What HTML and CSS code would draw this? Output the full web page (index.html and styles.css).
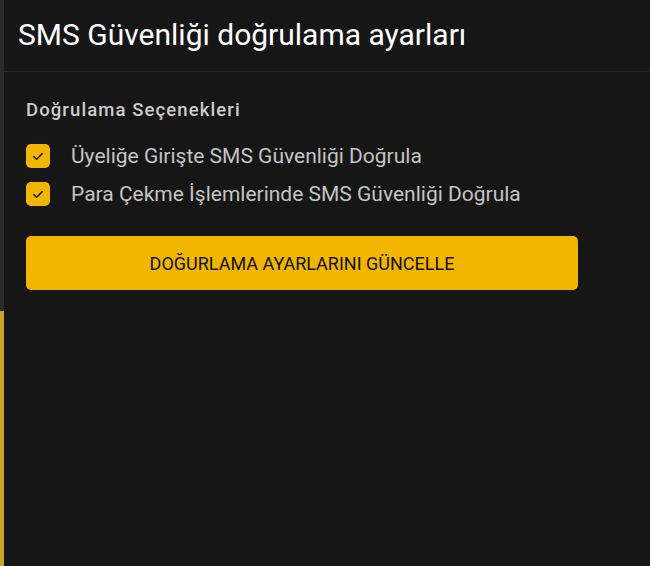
FILE: index.html
```html
<!DOCTYPE html>
<html lang="tr">
<head>
<meta charset="utf-8">
<link rel="stylesheet" href="styles.css">
</head>
<body>
<div class="page">
  <div class="rail">
    <div class="rail-top"></div>
    <div class="rail-bottom"></div>
  </div>
  <div class="main">
    <header class="header">
      <h1 class="title">SMS Güvenliği doğrulama ayarları</h1>
    </header>
    <section class="content">
      <h2 class="subtitle">Doğrulama Seçenekleri</h2>
      <label class="option">
        <span class="box"><svg width="14" height="14" viewBox="0 0 14 14"><path d="M2.8 7.6 L5.6 10.2 L11.2 4.6" fill="none" stroke="#1a1a1a" stroke-width="1.5" stroke-linecap="round" stroke-linejoin="round"/></svg></span>
        <span class="option-text">Üyeliğe Girişte SMS Güvenliği Doğrula</span>
      </label>
      <label class="option">
        <span class="box"><svg width="14" height="14" viewBox="0 0 14 14"><path d="M2.8 7.6 L5.6 10.2 L11.2 4.6" fill="none" stroke="#1a1a1a" stroke-width="1.5" stroke-linecap="round" stroke-linejoin="round"/></svg></span>
        <span class="option-text">Para Çekme İşlemlerinde SMS Güvenliği Doğrula</span>
      </label>
      <button class="btn">DOĞURLAMA AYARLARINI GÜNCELLE</button>
    </section>
  </div>
</div>
</body>
</html>
```

FILE: styles.css
```css
* { box-sizing: border-box; }
html, body {
  margin: 0;
  padding: 0;
  background: #161616;
  height: 100%;
}
body {
  font-family: Roboto, "Liberation Sans", sans-serif;
}
.page {
  display: flex;
  height: 566px;
  overflow: hidden;
}
.rail {
  width: 4px;
  display: flex;
  flex-direction: column;
}
.rail-top {
  height: 311px;
  background: #2b2b2b;
}
.rail-bottom {
  flex: 1;
  background: #c9a22c;
}
.main {
  flex: 1;
  display: flex;
  flex-direction: column;
}
.header {
  height: 72px;
  border-bottom: 1px solid #2a2a2a;
  padding: 0 0 0 14px;
  display: flex;
  align-items: center;
}
.title {
  margin: 0;
  font-weight: 400;
  font-size: 30px;
  color: #ffffff;
  line-height: 1;
  position: relative;
  top: -1px;
}
.content {
  padding: 28px 0 0 22px;
  display: flex;
  flex-direction: column;
}
.subtitle {
  margin: 0 0 17px 0;
  font-weight: 500;
  font-size: 18.5px;
  letter-spacing: 1.1px;
  color: #cccccc;
  line-height: 20px;
}
.option {
  display: flex;
  align-items: center;
  height: 38px;
}
.box {
  width: 24px;
  height: 24px;
  border-radius: 5px;
  background: #f2b600;
  display: flex;
  align-items: center;
  justify-content: center;
  margin-right: 21px;
}
.option-text {
  font-size: 21px;
  color: #c4c4c4;
}
.btn {
  margin-top: 23px;
  width: 552px;
  height: 54px;
  border: none;
  border-radius: 5px;
  background: #f2b600;
  color: #111111;
  font-family: Roboto, "Liberation Sans", sans-serif;
  font-size: 18px;
  font-weight: 400;
  letter-spacing: 0;
  cursor: pointer;
}
```
